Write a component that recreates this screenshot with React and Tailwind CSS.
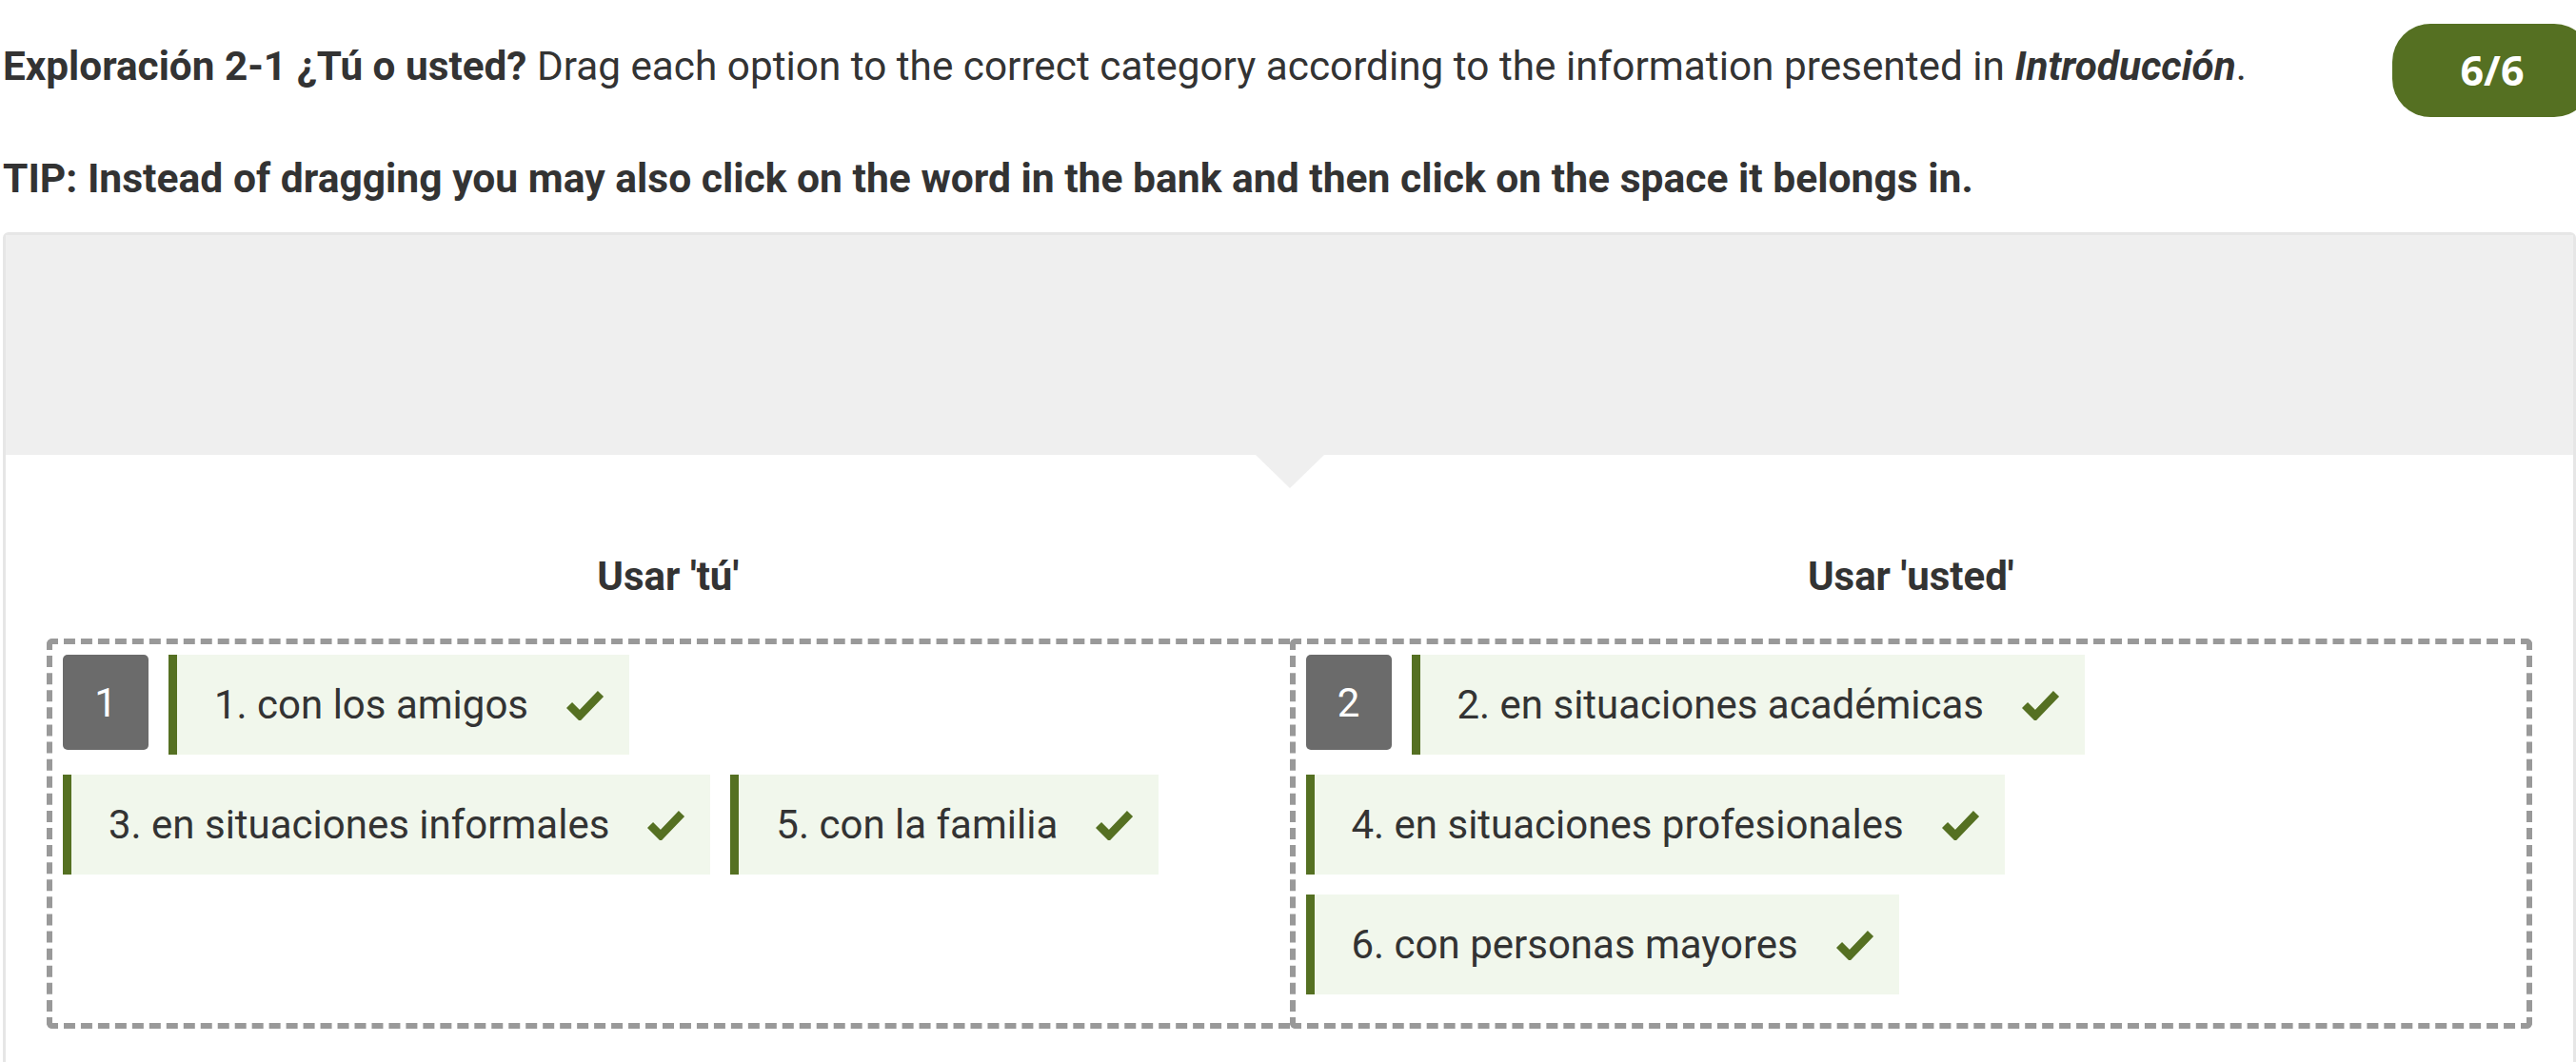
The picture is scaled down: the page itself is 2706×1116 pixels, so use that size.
import React from 'react';

const categories = [
  {
    heading: "Usar 'tú'",
    number: 1,
    rows: [['1. con los amigos'], ['3. en situaciones informales', '5. con la familia']],
  },
  {
    heading: "Usar 'usted'",
    number: 2,
    rows: [['2. en situaciones académicas'], ['4. en situaciones profesionales'], ['6. con personas mayores']],
  },
];

const CheckMark = () => (
  <svg viewBox="0 0 40 32" className="w-[40px] h-[32px] shrink-0" aria-hidden="true">
    <polyline points="3,16 14,27 36,4" fill="none" stroke="#557022" strokeWidth="8.5" strokeLinejoin="miter" />
  </svg>
);

const NumberBox = ({ n }) => (
  <div className="flex items-center justify-center w-[90px] h-[100px] shrink-0 rounded-[5px] bg-[#6b6b6b] text-white">
    {n}
  </div>
);

const Chip = ({ label }) => (
  <div className="flex items-center h-[105px] shrink-0 border-l-[9px] border-[#557022] bg-[#f1f7ec] pl-[39px] pr-[26px] gap-[40px] whitespace-nowrap">
    <span>{label}</span>
    <CheckMark />
  </div>
);

const DropZone = ({ category, first }) => (
  <div className="flex flex-col">
    <h3 className="text-center font-bold leading-[63px]">{category.heading}</h3>
    <div
      className={
        first
          ? 'flex-1 mt-[34px] flex flex-col gap-[21px] p-[11px] pb-[30px] border-[6px] border-r-0 border-dashed border-[#999999] rounded-l-[6px]'
          : 'flex-1 mt-[34px] flex flex-col gap-[21px] p-[11px] pb-[30px] border-[6px] border-dashed border-[#999999] rounded-[6px]'
      }
    >
      {category.rows.map((row, i) => (
        <div key={i} className="flex items-start gap-[21px]">
          {i === 0 && <NumberBox n={category.number} />}
          {row.map((label) => (
            <Chip key={label} label={label} />
          ))}
        </div>
      ))}
    </div>
  </div>
);

export default function App() {
  return (
    <div className="w-[2706px] h-[1116px] overflow-hidden bg-white pl-[3px] text-[42px] text-[#333333] font-[Roboto,sans-serif]">
      <div className="flex items-start justify-between">
        <p className="pt-[38px] leading-[63px] text-[42.3px]">
          <span className="font-bold">Exploración 2-1 ¿Tú o usted?</span> Drag each option to the correct category
          according to the information presented in <span className="font-bold italic">Introducción</span>.
        </p>
        <div className="mt-[25px] -mr-[17px] flex items-center justify-center w-[210px] h-[98px] shrink-0 rounded-[40px] bg-[#557022] text-white text-[43px] font-bold font-['Open_Sans',sans-serif]">
          6/6
        </div>
      </div>

      <p className="mt-[33px] font-bold leading-[63px] text-[42.6px]">
        TIP: Instead of dragging you may also click on the word in the bank and then click on the space it belongs in.
      </p>

      <div className="mt-[25px] border-[3px] border-[#e6e6e6] rounded-t-[6px]">
        <div className="h-[231px] bg-[#efefef]" />
        <div className="relative px-[43px] pt-[96px] pb-[40px]">
          <div className="absolute left-1/2 top-0 -translate-x-1/2 w-0 h-0 border-x-[36px] border-x-transparent border-t-[35px] border-t-[#efefef]" />
          <div className="grid grid-cols-2">
            {categories.map((c, i) => (
              <DropZone key={c.heading} category={c} first={i === 0} />
            ))}
          </div>
        </div>
      </div>
    </div>
  );
}
